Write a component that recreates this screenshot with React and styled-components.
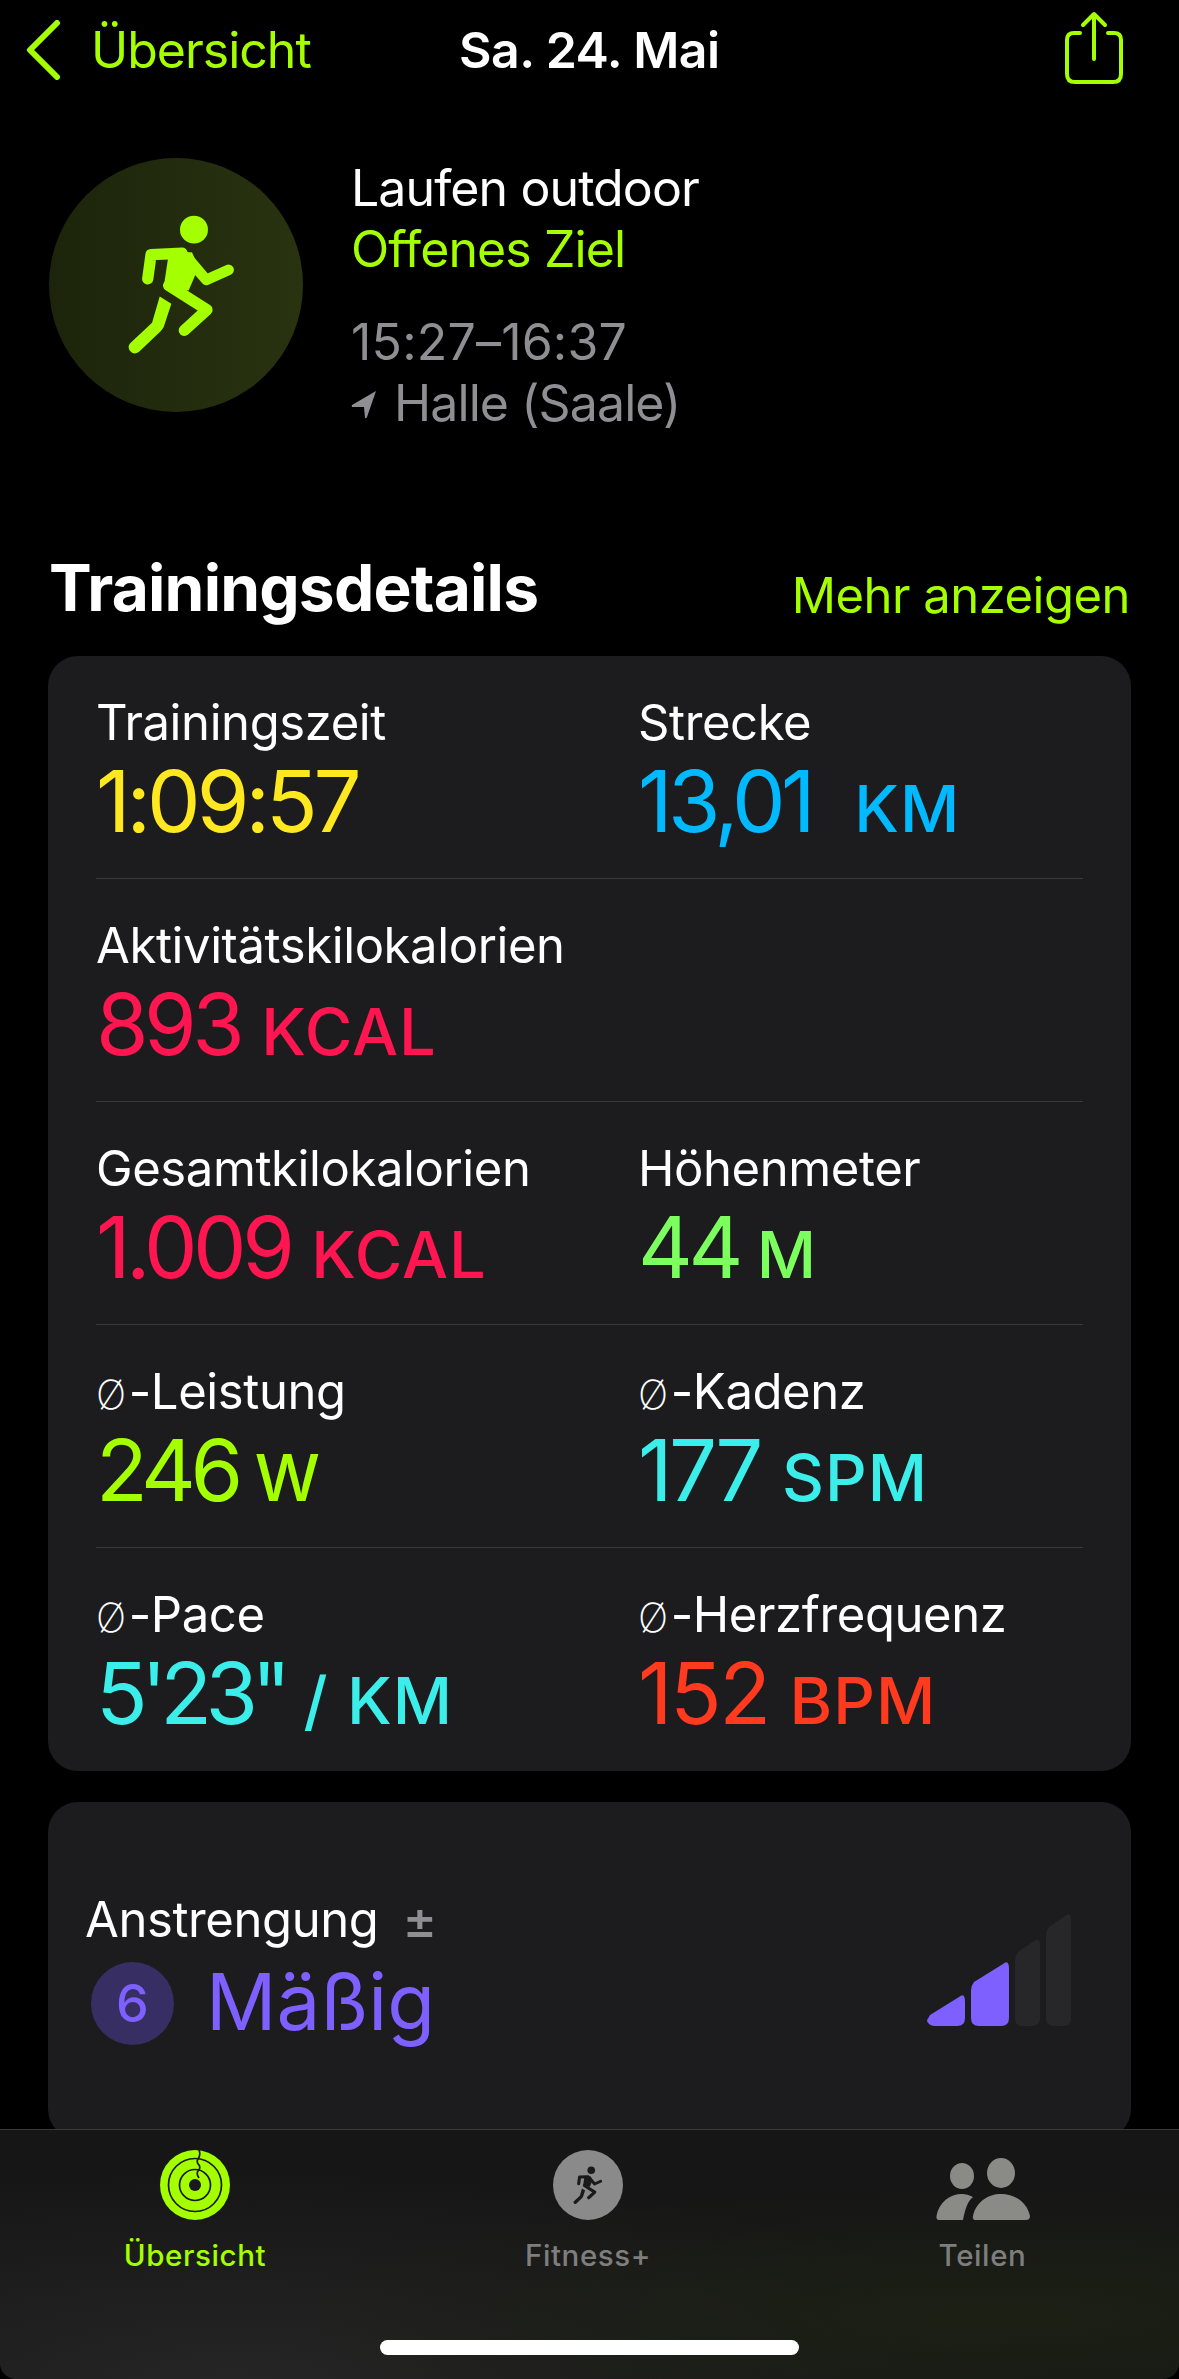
import React from "react";
import styled, { createGlobalStyle } from "styled-components";

const GlobalStyle = createGlobalStyle`
  html, body {
    margin: 0;
    background: #000;
  }
  * {
    box-sizing: border-box;
  }
`;

const LIME = "#a4ff00";
const PURPLE = "#7d60ff";

const rows = [
  [
    { label: "Trainingszeit", value: "1:09:57", color: "#ffe81f", track: -4 },
    { label: "Strecke", value: "13,01", unit: "KM", color: "#00b9ff", gap: 43 },
  ],
  [{ label: "Aktivitätskilokalorien", value: "893", unit: "KCAL", color: "#ff1650" }],
  [
    { label: "Gesamtkilokalorien", value: "1.009", unit: "KCAL", color: "#ff1650" },
    { label: "Höhenmeter", value: "44", unit: "M", color: "#7cff5e", gap: 18 },
  ],
  [
    { avg: true, label: "-Leistung", value: "246", unit: "W", color: LIME, track: -5.5, gap: 17 },
    { avg: true, label: "-Kadenz", value: "177", unit: "SPM", color: "#3beeea", track: -3.5, gap: 22 },
  ],
  [
    { avg: true, label: "-Pace", value: "5'23\"", unit: "/ KM", color: "#3beeea", track: -6.5, gap: 19 },
    { avg: true, label: "-Herzfrequenz", value: "152", unit: "BPM", color: "#ff3a1e", track: -2.5 },
  ],
];

const Runner = ({ color, width, height }) => (
  <svg width={width} height={height} viewBox="20 220 330 430" fill={color}>
    <circle cx="221" cy="267" r="42" />
    <path d="M82 415 L92 342 L185 338" fill="none" stroke={color} strokeWidth="34" strokeLinecap="round" strokeLinejoin="round" />
    <path d="M200 350 L258 418 L325 388" fill="none" stroke={color} strokeWidth="32" strokeLinecap="round" strokeLinejoin="round" />
    <polygon points="145,340 215,335 235,380 205,450 130,440" />
    <path d="M145 435 L260 508 L192 570" fill="none" stroke={color} strokeWidth="34" strokeLinecap="round" strokeLinejoin="round" />
    <path d="M118 468 L153 490 L130 560 Q126 568 120 573 L55 635 Q40 645 28 631 Q20 618 30 608 L95 547 Z" />
  </svg>
);

const Chevron = () => (
  <svg width="36" height="60" viewBox="0 0 36 60" fill="none" stroke={LIME} strokeWidth="6" strokeLinecap="round" strokeLinejoin="round">
    <path d="M31 3 L4 30 L31 57" />
  </svg>
);

const ShareIcon = () => (
  <svg width="60" height="74" viewBox="0 0 60 74" fill="none" stroke={LIME} strokeWidth="4" strokeLinecap="round" strokeLinejoin="round">
    <path d="M16 22 H10 Q3 22 3 29 V63 Q3 71 11 71 H49 Q57 71 57 63 V29 Q57 22 50 22 H44" />
    <path d="M30 48 V3 M19 14 L30 3 L41 14" />
  </svg>
);

const LocationArrow = () => (
  <svg width="26" height="30" viewBox="0 0 26 30" fill="#8e8e93">
    <path d="M25 2 L1 16 Q0 18 2 18 L13 18 L14 29 Q15 30 16 28 Z" />
  </svg>
);

const Rings = () => (
  <svg width="70" height="70" viewBox="0 0 70 70">
    <circle cx="35" cy="35" r="35" fill={LIME} />
    <g fill="none" stroke="#1a1a1a" strokeWidth="1.7">
      <circle cx="35" cy="35" r="26.5" />
      <circle cx="35" cy="35" r="15.5" />
      <path d="M39 0 Q41 5 38 9 Q36 12 39 15 Q41 18 38 21 Q36 24 39 28" />
    </g>
    <circle cx="35" cy="35" r="6" fill="#1a1a1a" />
  </svg>
);

const FitnessIcon = () => (
  <FitnessDisc>
    <Runner color="#1a1a1a" width={30} height={39} />
  </FitnessDisc>
);

const People = () => (
  <svg width="94" height="70" viewBox="0 0 94 70" fill="#8a8b86">
    <ellipse cx="26" cy="26" rx="12" ry="13" />
    <ellipse cx="65" cy="23" rx="14" ry="15" />
    <path d="M40 70 Q36 70 37 66 C40 52 52 44 65 44 C79 44 91 52 94 66 Q94 70 90 70 Z" />
    <path d="M3 70 Q0 70 .5 66 C3 52 14 44 26 44 C30 44 33 45 37 47 C31 52 29 60 27 70 Z" />
  </svg>
);

const bars = [
  { x: 0, w: 38, top: 81, slant: 20, fill: PURPLE },
  { x: 44, w: 38, top: 48, slant: 20, fill: PURPLE },
  { x: 88, w: 25, top: 25, slant: 13, fill: "#27272a" },
  { x: 119, w: 25, top: 0, slant: 13, fill: "#27272a" },
];

const barPath = ({ x, w, top, slant }) =>
  `M${x} ${top + slant + 8} Q${x} ${top + slant + 4} ${x + 3} ${top + slant} L${x + w - 6} ${top + 2} ` +
  `Q${x + w} ${top - 3} ${x + w} ${top + 7} V104 Q${x + w} 112 ${x + w - 8} 112 H${x + 8} Q${x} 112 ${x} 104 Z`;

const Bars = () => (
  <BarsSvg width="144" height="112" viewBox="0 0 144 112">
    {bars.map((b) => (
      <path key={b.x} d={barPath(b)} fill={b.fill} />
    ))}
  </BarsSvg>
);

export default function App() {
  return (
    <Screen>
      <GlobalStyle />
      <Header>
        <BackLink>
          <Chevron />
          <span>Übersicht</span>
        </BackLink>
        <Title>Sa. 24. Mai</Title>
        <ShareSlot>
          <ShareIcon />
        </ShareSlot>
      </Header>

      <Hero>
        <HeroDisc>
          <Runner color={LIME} width={110} height={143} />
        </HeroDisc>
        <HeroText>
          <HeroLine>Laufen outdoor</HeroLine>
          <HeroLine $color={LIME}>Offenes Ziel</HeroLine>
          <TimeLine>15:27–16:37</TimeLine>
          <PlaceLine>
            <LocationArrow />
            Halle (Saale)
          </PlaceLine>
        </HeroText>
      </Hero>

      <SectionHead>
        <SectionTitle>Trainingsdetails</SectionTitle>
        <MoreLink>Mehr anzeigen</MoreLink>
      </SectionHead>

      <Card>
        {rows.map((row, i) => (
          <MetricRow key={i}>
            {row.map((m) => (
              <Metric key={m.label}>
                <MetricLabel>
                  {m.avg && <Diameter>Ø</Diameter>}
                  {m.label}
                </MetricLabel>
                <MetricValue $color={m.color} $track={m.track}>
                  {m.value}
                  {m.unit && <MetricUnit $gap={m.gap}>{m.unit}</MetricUnit>}
                </MetricValue>
              </Metric>
            ))}
          </MetricRow>
        ))}
      </Card>

      <EffortCard>
        <div>
          <EffortLabel>
            Anstrengung <PlusMinus>±</PlusMinus>
          </EffortLabel>
          <EffortValue>
            <EffortBadge>6</EffortBadge>
            <EffortText>Mäßig</EffortText>
          </EffortValue>
        </div>
        <Bars />
      </EffortCard>

      <TabBar>
        <Tab $color={LIME}>
          <TabIcon><Rings /></TabIcon>
          Übersicht
        </Tab>
        <Tab $color="#7e7e7e">
          <TabIcon><FitnessIcon /></TabIcon>
          Fitness+
        </Tab>
        <Tab $color="#7e7e7e">
          <TabIcon><People /></TabIcon>
          Teilen
        </Tab>
        <HomeIndicator />
      </TabBar>
    </Screen>
  );
}

const Screen = styled.div`
  position: relative;
  width: 1179px;
  height: 2379px;
  overflow: hidden;
  background: #000;
  color: #fff;
  font-family: Inter, "Liberation Sans", sans-serif;
`;

const Header = styled.header`
  display: grid;
  grid-template-columns: 433px auto 1fr;
  align-items: center;
  height: 100px;
  padding: 0 55px 0 26px;
`;

const BackLink = styled.div`
  display: flex;
  align-items: center;
  gap: 29px;
  font-size: 50px;
  letter-spacing: -1px;
  color: ${LIME};
`;

const Title = styled.div`
  font-size: 50px;
  font-weight: 600;
  letter-spacing: -0.5px;
`;

const ShareSlot = styled.div`
  display: flex;
  justify-content: flex-end;
  margin-bottom: 4px;
`;

const Hero = styled.section`
  display: flex;
  gap: 48px;
  margin-top: 58px;
  padding-left: 49px;
`;

const HeroDisc = styled.div`
  display: flex;
  align-items: center;
  justify-content: center;
  width: 254px;
  height: 254px;
  padding-left: 12px;
  border-radius: 50%;
  background: linear-gradient(90deg, #1c240b 0%, #293310 100%);
`;

const HeroText = styled.div`
  display: flex;
  flex-direction: column;
`;

const HeroLine = styled.div`
  height: 61px;
  font-size: 50px;
  line-height: 61px;
  letter-spacing: -0.9px;
  color: ${(p) => p.$color || "#fff"};
`;

const TimeLine = styled(HeroLine)`
  margin-top: 32px;
  letter-spacing: 0.2px;
  color: #8e8e93;
`;

const PlaceLine = styled(HeroLine)`
  display: flex;
  align-items: center;
  gap: 17px;
  color: #8e8e93;
`;

const SectionHead = styled.div`
  display: flex;
  align-items: center;
  justify-content: space-between;
  margin-top: 118px;
  padding: 0 49px;
  height: 70px;
`;

const SectionTitle = styled.h2`
  margin: 0;
  font-size: 64px;
  font-weight: 700;
  letter-spacing: -0.8px;
`;

const MoreLink = styled.div`
  margin-top: 16px;
  font-size: 49px;
  letter-spacing: -0.5px;
  color: ${LIME};
`;

const Card = styled.section`
  margin: 34px 48px 0;
  border-radius: 30px;
  background: #1c1c1e;
`;

const MetricRow = styled.div`
  display: grid;
  grid-template-columns: 542px 1fr;
  height: 223px;
  margin: 0 48px;
  padding-top: 39px;
  border-bottom: 1px solid #3a3a3c;

  &:first-child {
    height: 223px;
    padding-top: 39px;
  }

  &:last-child {
    border-bottom: 0;
  }
`;

const Metric = styled.div`
  display: flex;
  flex-direction: column;
  gap: 6px;
`;

const MetricLabel = styled.div`
  height: 56px;
  font-size: 49px;
  line-height: 56px;
  letter-spacing: -0.4px;
`;

const Diameter = styled.span`
  margin-right: 3px;
  font-size: 40px;
  font-weight: 200;
`;

const MetricValue = styled.div`
  display: flex;
  align-items: baseline;
  height: 90px;
  font-size: 85px;
  line-height: 90px;
  letter-spacing: ${(p) => p.$track ?? -4.5}px;
  color: ${(p) => p.$color};
`;

const MetricUnit = styled.span`
  margin-left: ${(p) => p.$gap ?? 21}px;
  font-size: 65px;
  font-weight: 500;
  letter-spacing: 1px;
`;

const EffortCard = styled.section`
  display: flex;
  align-items: flex-start;
  justify-content: space-between;
  height: 337px;
  margin: 31px 48px 0;
  padding: 89px 60px 0 37px;
  border-radius: 30px;
  background: #1c1c1e;
`;

const BarsSvg = styled.svg`
  margin-top: 23px;
`;

const EffortLabel = styled.div`
  display: flex;
  align-items: center;
  gap: 24px;
  height: 56px;
  font-size: 49px;
  letter-spacing: -0.4px;
`;

const PlusMinus = styled.span`
  font-size: 52px;
  font-weight: 500;
  color: #8e8e93;
`;

const EffortValue = styled.div`
  display: flex;
  align-items: center;
  gap: 32px;
  margin: 10px 0 0 6px;
`;

const EffortBadge = styled.div`
  display: flex;
  align-items: center;
  justify-content: center;
  width: 83px;
  height: 83px;
  border-radius: 50%;
  background: #372f63;
  font-size: 52px;
  font-weight: 500;
  color: ${PURPLE};
`;

const EffortText = styled.div`
  margin-top: -3px;
  font-size: 78px;
  color: ${PURPLE};
`;

const TabBar = styled.nav`
  position: absolute;
  left: 0;
  right: 0;
  bottom: 0;
  display: grid;
  grid-template-columns: 390px 396px 393px;
  height: 250px;
  border-top: 1px solid #3a3a3c;
  border-radius: 0 0 16px 16px;
  background:
    radial-gradient(ellipse at 85% 75%, #1c2014 0%, rgba(28, 32, 20, 0) 50%),
    radial-gradient(ellipse at 20% 100%, #252525 0%, rgba(37, 37, 37, 0) 60%),
    #161616;
`;

const Tab = styled.div`
  display: flex;
  flex-direction: column;
  align-items: center;
  padding-top: 20px;
  font-size: 29.5px;
  font-weight: 500;
  line-height: 36px;
  letter-spacing: 0.6px;
  color: ${(p) => p.$color};
`;

const TabIcon = styled.div`
  display: flex;
  align-items: flex-end;
  justify-content: center;
  height: 70px;
  margin-bottom: 17px;
`;

const FitnessDisc = styled.div`
  display: flex;
  align-items: center;
  justify-content: center;
  width: 70px;
  height: 70px;
  border-radius: 50%;
  background: #8a8a8a;
`;

const HomeIndicator = styled.div`
  position: absolute;
  left: 380px;
  bottom: 24px;
  width: 419px;
  height: 15px;
  border-radius: 8px;
  background: #fff;
`;
